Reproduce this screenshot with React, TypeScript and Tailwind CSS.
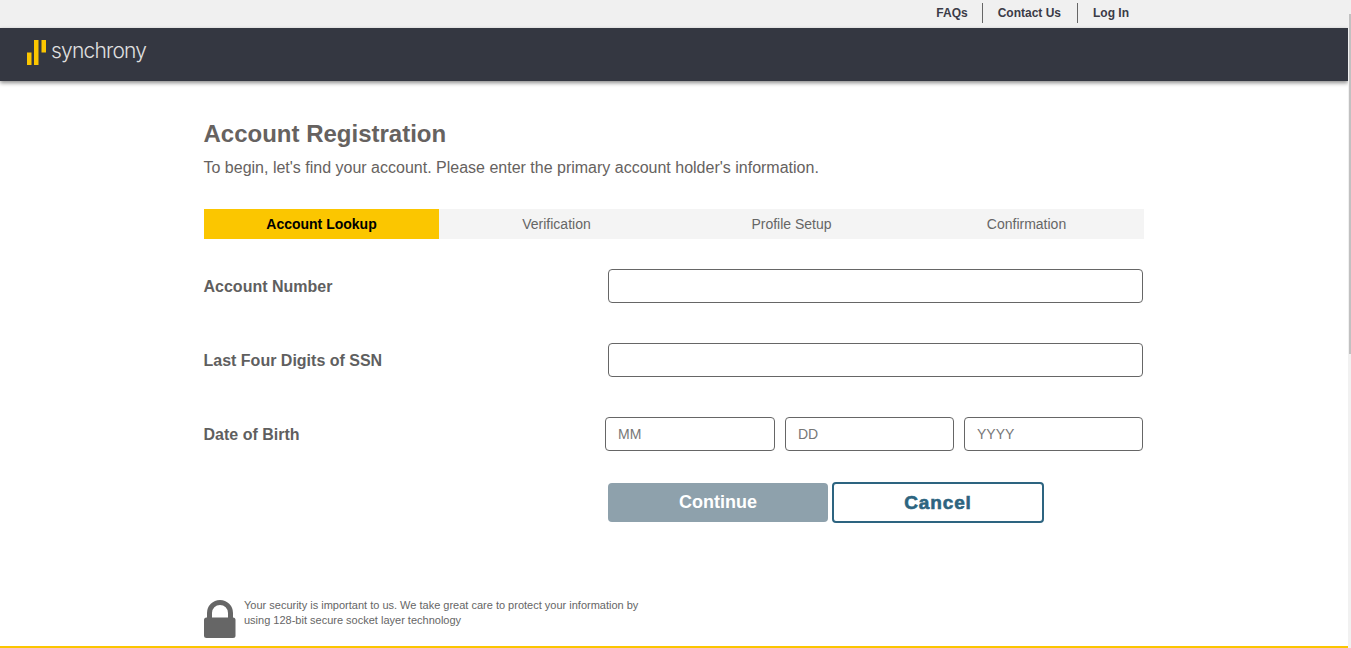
const steps = ['Account Lookup', 'Verification', 'Profile Setup', 'Confirmation'];

function Logo() {
  return (
    <div className="flex items-start">
      <svg width="21" height="26" viewBox="0 0 21 26" className="block">
        <rect x="1" y="12.5" width="4.5" height="12.5" fill="#fbc600" />
        <rect x="8" y="0" width="4.5" height="25" fill="#fbc600" />
        <rect x="15.5" y="0" width="4.5" height="12.5" fill="#fbc600" />
      </svg>
      <span className="ml-[4px] text-[21px] tracking-[-0.8px] leading-none text-[#e0e0e0] font-['Inter',sans-serif] font-light">
        synchrony
      </span>
    </div>
  );
}

function Field({ label }: { label: string }) {
  return (
    <div className="flex items-center h-[34px] mb-10">
      <label className="w-[404px] pt-[2px] -ml-[0.5px] text-base font-bold text-[#5f5f5f]">{label}</label>
      <input className="w-[535px] h-[34px] border border-[#666] rounded bg-white" />
    </div>
  );
}

export default function App() {
  return (
    <div className="h-[648px] overflow-hidden relative bg-white font-['Liberation_Sans',Arial,sans-serif]">
      <div className="flex items-start justify-end h-7 pt-[3px] bg-[#f0f0f0] pr-[222px] text-xs font-bold text-[#3b3b47]">
        <a className="pr-[14px] leading-5">FAQs</a>
        <a className="pl-[15px] pr-[16px] border-l border-[#666] leading-5">Contact Us</a>
        <a className="pl-[15px] border-l border-[#666] leading-5">Log In</a>
      </div>
      <header className="h-[53px] bg-[#343741] shadow-[0_2px_4px_rgba(0,0,0,0.45)] flex items-start pt-[12px] pl-[26px] mr-[3px]">
        <Logo />
      </header>

      <main className="w-[940px] ml-[204px]">
        <h1 className="mt-[38px] -ml-[0.5px] text-2xl leading-[30px] font-bold text-[#666260]">Account Registration</h1>
        <p className="mt-[9px] -ml-[0.5px] text-base leading-[20px] text-[#666260]">
          To begin, let's find your account. Please enter the primary account holder's information.
        </p>

        <div className="mt-[31px] grid grid-cols-4 h-[30px] bg-[#f4f4f4] text-sm text-[#666]">
          {steps.map((s, i) => (
            <div
              key={s}
              className={i === 0 ? 'flex items-center justify-center bg-[#fbc600] font-bold text-black' : 'flex items-center justify-center'}
            >
              {s}
            </div>
          ))}
        </div>

        <div className="mt-[30px]">
          <Field label="Account Number" />
          <Field label="Last Four Digits of SSN" />
          <div className="flex items-center h-[34px]">
            <label className="w-[401px] pt-[2px] -ml-[0.5px] text-base font-bold text-[#5f5f5f]">Date of Birth</label>
            <div className="flex gap-[10px]">
              <input placeholder="MM" className="w-[170px] h-[34px] border border-[#666] rounded bg-white pl-[12.5px] pr-3 text-sm placeholder:text-[#777]" />
              <input placeholder="DD" className="w-[169px] h-[34px] border border-[#666] rounded bg-white pl-[12.5px] pr-3 text-sm placeholder:text-[#777]" />
              <input placeholder="YYYY" className="w-[179px] h-[34px] border border-[#666] rounded bg-white pl-[12.5px] pr-3 text-sm placeholder:text-[#777]" />
            </div>
          </div>
        </div>

        <div className="flex gap-[4px] ml-[404px] mt-[32px]">
          <button className="w-[220px] h-[39px] pb-px rounded bg-[#8ea1ac] text-lg font-bold text-white">Continue</button>
          <button className="w-[212px] h-[41px] -mt-px pt-[2px] rounded border-2 border-[#2d6480] bg-white text-[19px] font-bold tracking-[0.85px] text-[#2d6480] [-webkit-text-stroke:0.6px_#2d6480]">
            Cancel
          </button>
        </div>

        <div className="flex mt-[77px] items-start">
          <svg width="32" height="38" viewBox="0 0 32 38" className="shrink-0 block">
            <path d="M5.5 18V13a10.5 10.5 0 0 1 21 0v5" fill="none" stroke="#666" strokeWidth="5" />
            <rect x="0" y="17.5" width="31.5" height="20.5" rx="2.5" fill="#666" />
          </svg>
          <p className="ml-[8px] -mt-[2px] text-[11px] leading-[15px] text-[#666]">
            Your security is important to us. We take great care to protect your information by
            <br />
            using 128-bit secure socket layer technology
          </p>
        </div>
      </main>

      <div className="absolute left-0 right-[3px] bottom-0 h-0.5 bg-[#fbc600]" />
      <div className="absolute right-0 top-[14px] bottom-0 w-[3px] bg-[#f1f1f1]">
        <div className="ml-auto h-[340px] w-[2px] bg-[#c1c1c1]" />
      </div>
    </div>
  );
}
